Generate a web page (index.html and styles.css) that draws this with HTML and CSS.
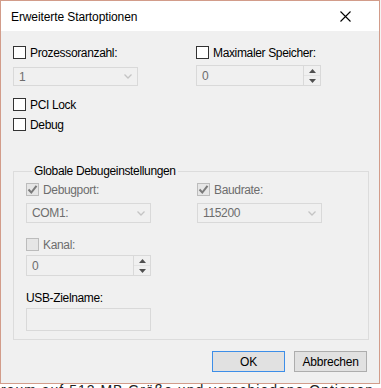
FILE: index.html
```html
<!DOCTYPE html>
<html lang="de">
<head>
<meta charset="utf-8">
<title>Erweiterte Startoptionen</title>
<link rel="stylesheet" href="styles.css">
</head>
<body>
<div class="backdrop">
  <div class="window">
    <div class="titlebar">
      <span class="title">Erweiterte Startoptionen</span>
      <svg class="close" width="11" height="11" viewBox="0 0 11 11"><path d="M0.5 0.5 L10.5 10.5 M10.5 0.5 L0.5 10.5" stroke="#000" stroke-width="1.1" fill="none"/></svg>
    </div>
    <div class="content">
      <div class="toprow">
        <div class="col">
          <label class="check"><span class="box"></span><span>Prozessoranzahl:</span></label>
          <div class="combo mt-combo1"><span class="val">1</span><svg class="chev" width="8" height="5" viewBox="0 0 8 5"><path d="M0.5 0.5 L4 4 L7.5 0.5" stroke="#c4c4c4" stroke-width="1.3" fill="none"/></svg></div>
        </div>
        <div class="col">
          <label class="check"><span class="box"></span><span>Maximaler Speicher:</span></label>
          <div class="spin mt-spin1"><span class="val">0</span><span class="spinbtns"><span class="sb up"><svg width="7" height="4" viewBox="0 0 7 4"><path d="M0 4 L3.5 0 L7 4 Z" fill="#505050"/></svg></span><span class="sb down"><svg width="7" height="4" viewBox="0 0 7 4"><path d="M0 0 L3.5 4 L7 0 Z" fill="#505050"/></svg></span></span></div>
        </div>
      </div>
      <label class="check mt-pci"><span class="box"></span><span>PCI Lock</span></label>
      <label class="check mt-debug"><span class="box"></span><span>Debug</span></label>

      <fieldset class="group">
        <legend>Globale Debugeinstellungen</legend>
        <div class="grow">
          <div class="gcol">
            <label class="check disabled"><span class="box checked"><svg width="11" height="11" viewBox="0 0 11 11"><path d="M1.5 5.5 L4.3 8.5 L9.5 1.8" stroke="#7a7a7a" stroke-width="2" fill="none"/></svg></span><span>Debugport:</span></label>
            <div class="combo mt-combo2"><span class="val">COM1:</span><svg class="chev" width="8" height="5" viewBox="0 0 8 5"><path d="M0.5 0.5 L4 4 L7.5 0.5" stroke="#c4c4c4" stroke-width="1.3" fill="none"/></svg></div>
          </div>
          <div class="gcol">
            <label class="check disabled"><span class="box checked"><svg width="11" height="11" viewBox="0 0 11 11"><path d="M1.5 5.5 L4.3 8.5 L9.5 1.8" stroke="#7a7a7a" stroke-width="2" fill="none"/></svg></span><span>Baudrate:</span></label>
            <div class="combo mt-combo2"><span class="val">115200</span><svg class="chev" width="8" height="5" viewBox="0 0 8 5"><path d="M0.5 0.5 L4 4 L7.5 0.5" stroke="#c4c4c4" stroke-width="1.3" fill="none"/></svg></div>
          </div>
        </div>
        <label class="check disabled mt-kanal"><span class="box dis"></span><span>Kanal:</span></label>
        <div class="spin narrow mt-spin2"><span class="val">0</span><span class="spinbtns"><span class="sb up"><svg width="7" height="4" viewBox="0 0 7 4"><path d="M0 4 L3.5 0 L7 4 Z" fill="#505050"/></svg></span><span class="sb down"><svg width="7" height="4" viewBox="0 0 7 4"><path d="M0 0 L3.5 4 L7 0 Z" fill="#505050"/></svg></span></span></div>
        <div class="usblabel">USB-Zielname:</div>
        <div class="textbox"></div>
      </fieldset>

      <div class="buttons">
        <button class="btn default">OK</button>
        <button class="btn">Abbrechen</button>
      </div>
    </div>
  </div>
  <div class="behind">raum auf 512 MB Größe und verschiedene Optionen</div>
</div>
</body>
</html>
```

FILE: styles.css
```css
* { box-sizing: border-box; }
html, body { margin: 0; padding: 0; }
body {
  width: 381px;
  height: 388px;
  overflow: hidden;
  background: #f4f4f4;
  font-family: "Liberation Sans", Arial, sans-serif;
  font-size: 12px;
  letter-spacing: -0.35px;
  color: #000;
}
.backdrop {
  width: 381px;
  height: 388px;
  display: flex;
  flex-direction: column;
}
.window {
  width: 380px;
  height: 384px;
  flex: none;
  border: 1px solid #d29c8a;
  background: #f0f0f0;
  display: flex;
  flex-direction: column;
}
.titlebar {
  height: 30px;
  background: #fff;
  display: flex;
  align-items: center;
  justify-content: space-between;
  padding: 0 28px 0 10px;
  flex: none;
}
.title {
  font-size: 12px;
  letter-spacing: -0.1px;
  margin-top: 1px;
}
.close { display: block; }

.content {
  padding: 15px 0 0 12px;
  display: flex;
  flex-direction: column;
}
.toprow { display: flex; }
.col { display: flex; flex-direction: column; width: 193px; }

.check {
  display: flex;
  align-items: center;
  height: 13px;
  gap: 4px;
  white-space: nowrap;
}
.check.disabled { color: #6d6d6d; }
.box {
  width: 13px;
  height: 13px;
  border: 1px solid #333;
  background: #fff;
  flex: none;
  display: flex;
  align-items: center;
  justify-content: center;
}
.box.checked, .box.dis {
  border-color: #bcbcbc;
  background: #e6e6e6;
}
.box svg { display: block; }

.combo, .spin {
  border: 1px solid #d9d9d9;
  background: #f0f0f0;
  color: #6d6d6d;
  display: flex;
  align-items: center;
  width: 125px;
}
.combo { height: 19px; padding: 0 5px; justify-content: space-between; }
.spin { height: 21px; padding-left: 5px; justify-content: space-between; }
.chev { display: block; }
.mt-combo1 { margin-top: 8px; }
.mt-spin1 { margin-top: 6px; }
.spinbtns {
  display: flex;
  flex-direction: column;
  width: 17px;
  height: 19px;
  border-left: 1px solid #d9d9d9;
}
.sb {
  flex: 1;
  display: flex;
  align-items: center;
  justify-content: center;
  background: #f0f0f0;
}
.sb.up { border-bottom: 1px solid #e3e3e3; }
.sb svg { display: block; }

.mt-pci { margin-top: 12px; }
.mt-debug { margin-top: 7px; }

.group {
  margin: 33px 0 0 0;
  width: 356px;
  height: 176px;
  border: 1px solid #dcdcdc;
  padding: 5px 0 0 12px;
  min-width: 0;
}
.group legend {
  padding: 0 2px;
  margin-left: 6px;
  line-height: 14px;
}
.grow { display: flex; }
.gcol { display: flex; flex-direction: column; width: 180px; }
.mt-combo2 { margin-top: 7px; height: 20px; }
.mt-kanal { margin-top: 15px; }
.mt-spin2 { margin-top: 4px; }
.usblabel { margin-top: 15px; line-height: 14px; }
.textbox {
  margin-top: 3px;
  width: 125px;
  height: 23px;
  border: 1px solid #d9d9d9;
  background: #f0f0f0;
}

.buttons {
  display: flex;
  gap: 9px;
  justify-content: flex-end;
  padding-right: 12px;
  margin-top: 11px;
}
.btn {
  width: 73px;
  height: 21px;
  border: 1px solid #adadad;
  background: #e1e1e1;
  font-family: inherit;
  font-size: 12px;
  letter-spacing: -0.2px;
  color: #000;
  padding: 0;
}
.btn.default { border-color: #3d8ee8; }

.behind {
  height: 4px;
  overflow: hidden;
  white-space: nowrap;
  font-size: 14px;
  line-height: 12px;
  color: #222;
  background: #fff;
  padding-left: 1px;
  letter-spacing: 1px;
}
```
